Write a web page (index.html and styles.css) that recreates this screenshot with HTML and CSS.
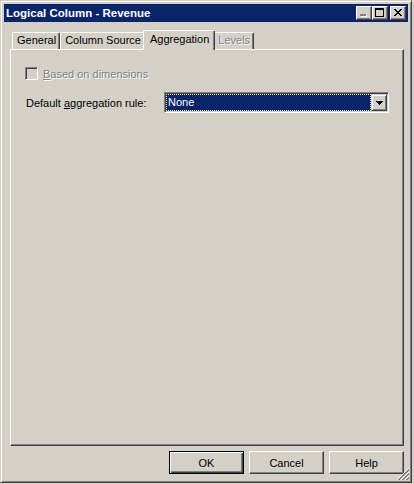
FILE: index.html
```html
<!DOCTYPE html>
<html>
<head>
<meta charset="utf-8">
<link rel="stylesheet" href="styles.css">
</head>
<body>
<div class="window">
  <div class="titlebar">
    <span class="title">Logical Column - Revenue</span>
    <div class="caption-btns">
      <span class="cbtn"><svg width="14" height="12" shape-rendering="crispEdges"><rect x="4" y="8" width="6" height="2" fill="#fff"/><rect x="3" y="7" width="6" height="2" fill="#808080"/></svg></span>
      <span class="cbtn"><svg width="14" height="12" shape-rendering="crispEdges"><path d="M2 1h9v2H2z M2 3h1v7H2z M10 3h1v7h-1z M2 9h9v1H2z" fill="#000"/></svg></span>
      <span class="cbtn close"><svg width="14" height="12" shape-rendering="crispEdges"><path d="M3 2h2v1H3z M9 2h2v1H9z M4 3h2v1H4z M8 3h2v1H8z M5 4h4v1H5z M6 5h2v1H6z M5 6h4v1H5z M4 7h2v1H4z M8 7h2v1H8z M3 8h2v1H3z M9 8h2v1H9z" fill="#000"/></svg></span>
    </div>
  </div>
  <div class="body">
    <div class="tabs">
      <div class="tab first">General</div>
      <div class="tab">Column Source</div>
      <div class="tab selected">Aggregation</div>
      <div class="tab disabled">Levels</div>
    </div>
    <div class="panel">
      <div class="check-row">
        <span class="checkbox"></span>
        <span class="check-label"><u>B</u>ased on dimensions</span>
      </div>
      <div class="field-row">
        <span class="field-label">Default <u>a</u>ggregation rule:</span>
        <div class="combo">
          <div class="combo-value">None</div>
          <span class="combo-btn"><svg width="7" height="4" shape-rendering="crispEdges"><path d="M0 0h7v1H0z M1 1h5v1H1z M2 2h3v1H2z M3 3h1v1H3z" fill="#000"/></svg></span>
        </div>
      </div>
    </div>
    <div class="footer">
      <button class="btn default">OK</button>
      <button class="btn">Cancel</button>
      <button class="btn">Help</button>
    </div>
  </div>
  <svg class="grip" width="12" height="12" shape-rendering="crispEdges">
    <path d="M11 0h1v1h-1z M10 1h1v1h-1z M9 2h1v1H9z M8 3h1v1H8z M7 4h1v1H7z M6 5h1v1H6z M5 6h1v1H5z M4 7h1v1H4z M3 8h1v1H3z M2 9h1v1H2z M1 10h1v1H1z M0 11h1v1H0z
             M11 4h1v1h-1z M10 5h1v1h-1z M9 6h1v1H9z M8 7h1v1H8z M7 8h1v1H7z M6 9h1v1H6z M5 10h1v1H5z M4 11h1v1H4z
             M11 8h1v1h-1z M10 9h1v1h-1z M9 10h1v1H9z M8 11h1v1H8z" fill="#fff"/>
    <path d="M11 1h1v2h-1z M10 2h1v2h-1z M9 3h1v2H9z M8 4h1v2H8z M7 5h1v2H7z M6 6h1v2H6z M5 7h1v2H5z M4 8h1v2H4z M3 9h1v2H3z M2 10h1v2H2z M1 11h1v1H1z
             M11 5h1v2h-1z M10 6h1v2h-1z M9 7h1v2H9z M8 8h1v2H8z M7 9h1v2H7z M6 10h1v2H6z M5 11h1v1H5z
             M11 9h1v2h-1z M10 10h1v2h-1z M9 11h1v1H9z" fill="#808080"/>
  </svg>
</div>
</body>
</html>
```
FILE: styles.css
```css
* { box-sizing: border-box; }
html, body { margin: 0; padding: 0; }
body {
  background: #D4D0C8;
  font-family: "Liberation Sans", Arial, sans-serif;
  font-size: 11px;
  color: #000;
  width: 414px;
  height: 484px;
  overflow: hidden;
}
.window {
  position: relative;
  width: 412px;
  height: 483px;
  display: flex;
  flex-direction: column;
  padding: 3px;
  border: 1px solid;
  border-color: #D4D0C8 #404040 #404040 #D4D0C8;
  box-shadow: inset 1px 1px #fff, inset -1px -1px #808080;
  background: #D4D0C8;
}
.titlebar {
  height: 18px;
  flex: none;
  background: #0A246A;
  color: #fff;
  display: flex;
  align-items: center;
  padding: 0 2px 0 2px;
}
.title {
  flex: 1;
  font-weight: bold;
  font-size: 11.5px;
  white-space: nowrap;
}
.caption-btns { display: flex; }
.cbtn {
  width: 16px;
  height: 14px;
  background: #D4D0C8;
  border: 1px solid;
  border-color: #fff #404040 #404040 #fff;
  box-shadow: inset -1px -1px #808080;
  display: block;
}
.cbtn svg { display: block; }
.cbtn.close { margin-left: 2px; }
.body {
  flex: 1;
  display: flex;
  flex-direction: column;
  padding: 8px 4px 5px 6px;
}
.tabs {
  display: flex;
  align-items: flex-end;
  height: 19px;
  flex: none;
}
.tab {
  position: relative;
  height: 17px;
  line-height: 15px;
  padding: 0 3px 0 4px;
  border-top: 1px solid #fff;
  border-left: 1px solid #fff;
  border-right: 1px solid #404040;
  box-shadow: inset -1px 0 #808080;
  border-radius: 2px 2px 0 0;
  white-space: nowrap;
}
.tab.first { margin-left: 2px; }
.tab.selected {
  height: 20px;
  margin: 0 -2px -1px -2px;
  padding: 0 5px 0 6px;
  line-height: 17px;
  background: #D4D0C8;
  z-index: 1;
}
.tab.disabled {
  color: #808080;
  text-shadow: 1px 1px #fff;
}
.panel {
  flex: 1;
  border: 1px solid;
  border-color: #fff #404040 #404040 #fff;
  box-shadow: inset -1px -1px #808080;
  padding: 17px 0 0 14px;
}
.check-row {
  display: flex;
  align-items: center;
  height: 13px;
}
.checkbox {
  width: 13px;
  height: 13px;
  border: 1px solid;
  border-color: #808080 #fff #fff #808080;
  box-shadow: inset 1px 1px #404040, inset -1px -1px #D4D0C8;
  background: #D4D0C8;
}
.check-label {
  margin-left: 5px;
  color: #808080;
  text-shadow: 1px 1px #fff;
}
.field-row {
  margin-top: 12px;
  display: grid;
  grid-template-columns: 139px 225px;
  align-items: center;
}
.field-label { padding-left: 1px; }
.combo {
  height: 21px;
  display: flex;
  padding: 1px;
  border: 1px solid;
  border-color: #808080 #fff #fff #808080;
  box-shadow: inset 1px 1px #404040, inset -1px -1px #D4D0C8;
  background: #fff;
}
.combo-value {
  flex: 1;
  background: #0A246A;
  color: #fff;
  border: 1px dotted #F3E9A6;
  line-height: 15px;
  padding-left: 1px;
  font-size: 11px;
}
.combo-btn {
  width: 16px;
  height: 17px;
  border: 1px solid;
  border-color: #D4D0C8 #404040 #404040 #D4D0C8;
  box-shadow: inset 1px 1px #fff, inset -1px -1px #808080;
  background: #D4D0C8;
  display: flex;
  align-items: center;
  justify-content: center;
}
.combo-btn svg { display: block; }
.footer {
  flex: none;
  margin-top: 5px;
  display: flex;
  justify-content: flex-end;
  gap: 5px;
}
.btn {
  width: 75px;
  height: 23px;
  margin: 0;
  padding: 0;
  font-family: "Liberation Sans", Arial, sans-serif;
  font-size: 11px;
  color: #000;
  background: #D4D0C8;
  border: 1px solid;
  border-color: #fff #404040 #404040 #fff;
  box-shadow: inset -1px -1px #808080;
  border-radius: 0;
}
.btn.default {
  border: 1px solid #000;
  box-shadow: inset 1px 1px #fff, inset -1px -1px #404040, inset -2px -2px #808080;
}
.grip {
  position: absolute;
  right: 2px;
  bottom: 2px;
}
```
